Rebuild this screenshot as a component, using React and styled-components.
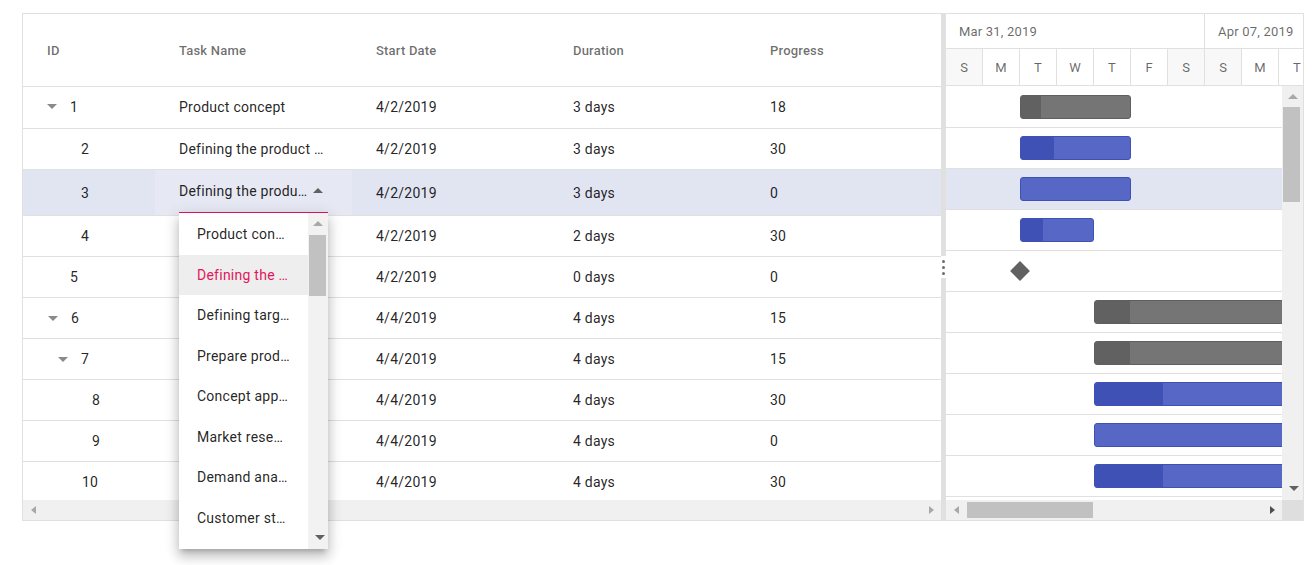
import React from 'react';
import styled, { createGlobalStyle } from 'styled-components';

const DAY = 37;

// Task rows for the grid side
const tasks = [
  { id: 1, pad: 24, expander: true, name: 'Product concept', start: '4/2/2019', duration: '3 days', progress: 18 },
  { id: 2, pad: 58, name: 'Defining the product and its usage', start: '4/2/2019', duration: '3 days', progress: 30 },
  { id: 3, pad: 58, name: 'Defining target audience', start: '4/2/2019', duration: '3 days', progress: 0, editing: true },
  { id: 4, pad: 58, name: 'Prepare product sketch and notes', start: '4/2/2019', duration: '2 days', progress: 30 },
  { id: 5, pad: 47, name: 'Concept approval', start: '4/2/2019', duration: '0 days', progress: 0 },
  { id: 6, pad: 25, expander: true, name: 'Market research', start: '4/4/2019', duration: '4 days', progress: 15 },
  { id: 7, pad: 35, expander: true, name: 'Demand analysis', start: '4/4/2019', duration: '4 days', progress: 15 },
  { id: 8, pad: 69, name: 'Customer strength', start: '4/4/2019', duration: '4 days', progress: 30 },
  { id: 9, pad: 69, name: 'Market opportunity analysis', start: '4/4/2019', duration: '4 days', progress: 0 },
  { id: 10, pad: 59, name: 'Competitor analysis', start: '4/4/2019', duration: '4 days', progress: 30 },
];

// Timeline bars
const bars = [
  { kind: 'parent', day: 2, width: 111, progress: 18 },
  { kind: 'child', day: 2, width: 111, progress: 30 },
  { kind: 'child', day: 2, width: 111, progress: 0, selected: true },
  { kind: 'child', day: 2, width: 74, progress: 30 },
  { kind: 'milestone', day: 2 },
  { kind: 'parent', day: 4, width: 233, progress: 15 },
  { kind: 'parent', day: 4, width: 233, progress: 15 },
  { kind: 'child', day: 4, width: 227, progress: 30 },
  { kind: 'child', day: 4, width: 227, progress: 0 },
  { kind: 'child', day: 4, width: 227, progress: 30 },
];

const days = ['S', 'M', 'T', 'W', 'T', 'F', 'S', 'S', 'M', 'T', 'W'];

const dropdownItems = [
  'Product concept',
  'Defining the product usage',
  'Defining target audience',
  'Prepare product sketch and notes',
  'Concept approval',
  'Market research',
  'Demand analysis',
  'Customer strength',
  'Market opportunity analysis',
];

const Arrows = {
  up: c => `border-width: 0 5px 5px; border-bottom-color: ${c};`,
  down: c => `border-width: 5px 5px 0; border-top-color: ${c};`,
  left: c => `border-width: 4px 5px 4px 0; border-right-color: ${c};`,
  right: c => `border-width: 4px 0 4px 5px; border-left-color: ${c};`,
};

const App = () => {
  return (
    <>
      <GlobalStyle />
      <Page>
        <Gantt>
          <GridPane>
            <GridHeader>
              <HeaderCell>ID</HeaderCell>
              <HeaderCell>Task Name</HeaderCell>
              <HeaderCell>Start Date</HeaderCell>
              <HeaderCell>Duration</HeaderCell>
              <HeaderCell>Progress</HeaderCell>
            </GridHeader>
            <GridBody>
              {tasks.map((t, i) => (
                <GridRow
                  key={t.id}
                  $selected={t.editing}
                  $first={i === 0}
                  $height={t.editing ? 46 : i === 0 ? 42 : 41}
                >
                  <IdCell $pad={t.pad}>
                    {t.expander && <Expander />}
                    {t.id}
                  </IdCell>
                  {t.editing ? (
                    <EditCell>
                      <EditInput>
                        <InputText>Defining the product usage</InputText>
                        <InputIcon>
                          <Arrow $dir="up" $color="#616161" />
                        </InputIcon>
                        <Popup>
                          <PopupList>
                            {dropdownItems.map((item, n) => (
                              <PopupItem key={item} $active={n === 1}>
                                {item}
                              </PopupItem>
                            ))}
                          </PopupList>
                          <PopupScroll>
                            <ScrollBtn $size={20}>
                              <Arrow $dir="up" $color="#a8a8a8" />
                            </ScrollBtn>
                            <VThumb $top={2} $height={61} />
                            <Spacer />
                            <ScrollBtn $size={24}>
                              <Arrow $dir="down" $color="#616161" />
                            </ScrollBtn>
                          </PopupScroll>
                        </Popup>
                      </EditInput>
                    </EditCell>
                  ) : (
                    <Cell>
                      <CellText>{t.name}</CellText>
                    </Cell>
                  )}
                  <Cell>{t.start}</Cell>
                  <Cell>{t.duration}</Cell>
                  <Cell>{t.progress}</Cell>
                </GridRow>
              ))}
            </GridBody>
            <HScroll>
              <ScrollBtn $size={20}>
                <Arrow $dir="left" $color="#a8a8a8" />
              </ScrollBtn>
              <Spacer />
              <ScrollBtn $size={20}>
                <Arrow $dir="right" $color="#a8a8a8" />
              </ScrollBtn>
            </HScroll>
          </GridPane>

          <Splitter>
            <Handle>
              <Dot />
              <Dot />
              <Dot />
            </Handle>
          </Splitter>

          <ChartPane>
            <TopTier>
              <TierCell>Mar 31, 2019</TierCell>
              <TierCell>Apr 07, 2019</TierCell>
            </TopTier>
            <DayTier>
              {days.map((d, i) => (
                <DayCell key={i} $weekend={d === 'S'}>
                  {d}
                </DayCell>
              ))}
            </DayTier>
            <ChartBody>
              <ChartRows>
                {bars.map((b, i) => (
                  <ChartRow key={i} $selected={b.selected} $first={i === 0}>
                    {b.kind === 'milestone' ? (
                      <Milestone style={{ marginLeft: b.day * DAY - 7 }} />
                    ) : (
                      <Bar $kind={b.kind} style={{ marginLeft: b.day * DAY, width: b.width }}>
                        {b.progress > 0 && (
                          <Progress $kind={b.kind} style={{ width: `${b.progress}%` }} />
                        )}
                      </Bar>
                    )}
                  </ChartRow>
                ))}
              </ChartRows>
              <VScroll>
                <ScrollBtn $size={21}>
                  <Arrow $dir="up" $color="#a8a8a8" />
                </ScrollBtn>
                <VThumb $top={0} $height={95} />
                <Spacer />
                <ScrollBtn $size={24}>
                  <Arrow $dir="down" $color="#616161" />
                </ScrollBtn>
              </VScroll>
            </ChartBody>
            <HScroll>
              <ScrollBtn $size={20}>
                <Arrow $dir="left" $color="#a8a8a8" />
              </ScrollBtn>
              <HThumb />
              <Spacer />
              <ScrollBtn $size={20}>
                <Arrow $dir="right" $color="#4f4f4f" />
              </ScrollBtn>
              <Corner />
            </HScroll>
          </ChartPane>
        </Gantt>
      </Page>
    </>
  );
};

const GlobalStyle = createGlobalStyle`
  * {
    box-sizing: border-box;
  }
  html, body {
    overflow: visible;
  }
  body {
    margin: 0;
    background: #fff;
    font-family: Roboto, "Liberation Sans", sans-serif;
  }
`;

const Page = styled.div`
  min-height: 565px;
  padding: 13px 0 0 22px;
`;

const Gantt = styled.div`
  display: flex;
  width: 1282px;
  height: 508px;
  border: 1px solid #e0e0e0;
`;

const GridPane = styled.div`
  width: 918px;
  flex-shrink: 0;
  display: flex;
  flex-direction: column;
`;

const GridRow = styled.div`
  display: grid;
  grid-template-columns: 132px 197px 197px 197px 1fr;
  height: ${p => p.$height}px;
  flex-shrink: 0;
  padding-bottom: ${p => (p.$first ? 2 : 0)}px;
  border-bottom: 1px solid #e0e0e0;
  background: ${p => (p.$selected ? '#e1e4f1' : '#fff')};
`;

const GridHeader = styled(GridRow).attrs({ $height: 73 })``;

const HeaderCell = styled.div`
  display: flex;
  align-items: center;
  padding-left: 24px;
  font-size: 13px;
  font-weight: 500;
  letter-spacing: 0.2px;
  color: rgba(0, 0, 0, 0.58);
`;

const GridBody = styled.div`
  height: 413px;
  flex-shrink: 0;
  display: flex;
  flex-direction: column;
`;

const Cell = styled.div`
  display: flex;
  align-items: center;
  min-width: 0;
  padding: 0 24px;
  font-size: 14px;
  letter-spacing: 0.25px;
  color: rgba(0, 0, 0, 0.87);
  white-space: nowrap;
`;

const CellText = styled.span`
  min-width: 0;
  overflow: hidden;
  text-overflow: ellipsis;
`;

const IdCell = styled(Cell)`
  padding-left: ${p => p.$pad}px;
`;

const Expander = styled.span`
  width: 0;
  height: 0;
  margin-right: 13px;
  border-style: solid;
  border-color: transparent;
  border-width: 5px 5px 0;
  border-top-color: #8a8a8a;
`;

const EditCell = styled.div`
  padding: 9px 24px 0;
  background: #e6e8f4;
  min-width: 0;
`;

const EditInput = styled.div`
  position: relative;
  display: flex;
  height: 35px;
  padding-bottom: 9px;
  border-bottom: 2px solid #e3165b;
`;

const InputText = styled.div`
  flex: 1;
  min-width: 0;
  font-size: 14px;
  letter-spacing: 0.25px;
  line-height: 24px;
  color: rgba(0, 0, 0, 0.87);
  white-space: nowrap;
  overflow: hidden;
  text-overflow: ellipsis;
`;

const InputIcon = styled.div`
  width: 20px;
  display: flex;
  align-items: center;
  justify-content: center;
  padding-bottom: 1px;
`;

const Popup = styled.div`
  position: absolute;
  top: 100%;
  left: 0;
  margin-top: 1px;
  width: 149px;
  height: 336px;
  display: flex;
  background: #fff;
  z-index: 10;
  box-shadow: 0 5px 5px -3px rgba(0, 0, 0, 0.2), 0 8px 10px 1px rgba(0, 0, 0, 0.14),
    0 3px 14px 2px rgba(0, 0, 0, 0.12);
`;

const PopupList = styled.div`
  flex: 1;
  min-width: 0;
  padding-top: 1px;
  overflow: hidden;
`;

const PopupItem = styled.div`
  height: 40.5px;
  line-height: 40.5px;
  padding: 0 18px;
  font-size: 14px;
  letter-spacing: 0.25px;
  white-space: nowrap;
  overflow: hidden;
  text-overflow: ellipsis;
  color: ${p => (p.$active ? '#e3165b' : 'rgba(0, 0, 0, 0.87)')};
  background: ${p => (p.$active ? '#eeeeee' : 'transparent')};
`;

const PopupScroll = styled.div`
  width: 20px;
  display: flex;
  flex-direction: column;
  background: #f2f2f2;
`;

const ScrollBtn = styled.div`
  flex-shrink: 0;
  display: flex;
  align-items: center;
  justify-content: center;
  width: ${p => p.$size}px;
  height: ${p => p.$size}px;
`;

const Arrow = styled.span`
  width: 0;
  height: 0;
  border-style: solid;
  border-color: transparent;
  ${p => Arrows[p.$dir](p.$color)}
`;

const VThumb = styled.div`
  flex-shrink: 0;
  width: 17px;
  margin: ${p => p.$top}px 0 0 1px;
  height: ${p => p.$height}px;
  background: #c1c1c1;
`;

const Spacer = styled.div`
  flex: 1;
`;

const HScroll = styled.div`
  height: 20px;
  flex-shrink: 0;
  display: flex;
  background: #f0f0f0;
`;

const HThumb = styled.div`
  width: 126px;
  height: 16px;
  margin: 2px 0 0 1px;
  background: #c1c1c1;
`;

const Corner = styled.div`
  width: 21px;
  background: #dedede;
`;

const Splitter = styled.div`
  width: 5px;
  flex-shrink: 0;
  display: flex;
  align-items: center;
  background: #e0e0e0;
`;

const Handle = styled.div`
  width: 5px;
  height: 22px;
  display: flex;
  flex-direction: column;
  align-items: center;
  justify-content: center;
  gap: 3px;
  background: #fff;
`;

const Dot = styled.span`
  width: 3px;
  height: 3px;
  border-radius: 50%;
  background: #6f6a72;
`;

const ChartPane = styled.div`
  width: 357px;
  flex-shrink: 0;
  display: flex;
  flex-direction: column;
  overflow: hidden;
`;

const TopTier = styled.div`
  height: 35px;
  flex-shrink: 0;
  display: flex;
  border-bottom: 1px solid #e0e0e0;
`;

const TierCell = styled.div`
  width: ${7 * DAY}px;
  flex-shrink: 0;
  display: flex;
  align-items: center;
  padding-left: 13px;
  border-right: 1px solid #e0e0e0;
  font-size: 13px;
  letter-spacing: 0.2px;
  color: rgba(0, 0, 0, 0.6);
  white-space: nowrap;
`;

const DayTier = styled.div`
  height: 37px;
  flex-shrink: 0;
  display: flex;
  border-bottom: 1px solid #e0e0e0;
`;

const DayCell = styled.div`
  width: ${DAY}px;
  flex-shrink: 0;
  display: flex;
  align-items: center;
  justify-content: center;
  border-right: 1px solid #e0e0e0;
  font-size: 13px;
  color: rgba(0, 0, 0, 0.6);
  background: ${p => (p.$weekend ? '#f8f8f8' : '#fff')};
`;

const ChartBody = styled.div`
  height: 414px;
  flex-shrink: 0;
  display: flex;
`;

const ChartRows = styled.div`
  flex: 1;
  min-width: 0;
  overflow: hidden;
`;

const ChartRow = styled.div`
  height: ${p => (p.$first ? 42 : 41)}px;
  display: flex;
  align-items: center;
  border-bottom: 1px solid #e0e0e0;
  background: ${p => (p.$selected ? '#e1e4f1' : '#fff')};
`;

const Bar = styled.div`
  flex-shrink: 0;
  height: 24px;
  border-radius: 3px;
  overflow: hidden;
  border: 1px solid ${p => (p.$kind === 'parent' ? '#5f5f5f' : '#3f51b5')};
  background: ${p => (p.$kind === 'parent' ? '#757575' : '#5767c6')};
`;

const Progress = styled.div`
  height: 100%;
  background: ${p => (p.$kind === 'parent' ? '#616161' : '#3f51b5')};
`;

const Milestone = styled.div`
  flex-shrink: 0;
  width: 14px;
  height: 14px;
  transform: rotate(45deg);
  background: #616161;
`;

const VScroll = styled.div`
  width: 21px;
  flex-shrink: 0;
  display: flex;
  flex-direction: column;
  background: #f0f0f0;
`;

export default App;
